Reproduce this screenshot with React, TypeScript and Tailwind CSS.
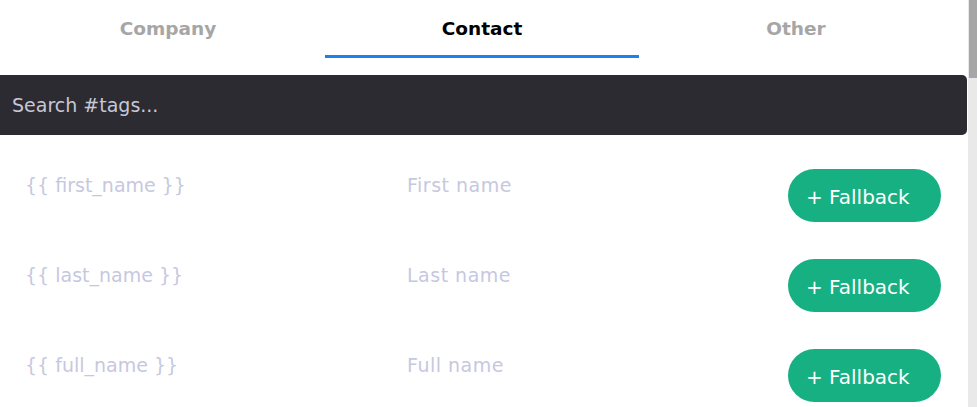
import React, { useState } from 'react';

const tabs = ['Company', 'Contact', 'Other'];

const fields = [
    { tag: 'first_name', label: 'First name' },
    { tag: 'last_name', label: 'Last name' },
    { tag: 'full_name', label: 'Full name' },
];

const App: React.FC = () => {
    const [active, setActive] = useState('Contact');
    const [query, setQuery] = useState('');

    return (
        <div
            className="flex h-[407px] w-[977px] overflow-hidden bg-white"
            style={{ fontFamily: '"DejaVu Sans", Verdana, sans-serif' }}
        >
            <div className="flex-1 flex flex-col min-w-0">
                {/* Tabs */}
                <div className="flex pl-[11px] pr-[15px] h-[75px] shrink-0">
                    {tabs.map(tab => {
                        const isActive = tab === active;
                        return (
                            <button
                                key={tab}
                                onClick={() => setActive(tab)}
                                className="flex-1 flex flex-col items-center"
                            >
                                <span className={`mt-[17px] h-[24px] leading-[24px] text-[18.5px] font-bold ${isActive ? 'text-black' : 'text-[#a6a6a6]'}`}>
                                    {tab}
                                </span>
                                <span className={`mt-[14px] h-[3px] w-full ${isActive ? 'bg-[#1b80f0]' : 'bg-transparent'}`}></span>
                            </button>
                        );
                    })}
                </div>

                {/* Search */}
                <div className="pr-px shrink-0">
                    <input
                        value={query}
                        onChange={(e) => setQuery(e.target.value)}
                        placeholder="Search #tags..."
                        className="w-full h-[60px] bg-[#2c2b31] rounded-r-[5px] px-3 text-[19px] text-[#d0d0d8] placeholder:text-[#c6c8d6] focus:outline-none"
                    />
                </div>

                {/* Tag rows */}
                <div className="flex flex-col">
                    {fields.map(f => (
                        <div key={f.tag} className="flex items-start pl-[25px] pr-[27px] pt-[34px] pb-[3px]">
                            <span className="w-[382px] mt-[4px] leading-[24px] text-[19px] text-[#c6c8e0]">
                                {'{{ '}{f.tag}{' }}'}
                            </span>
                            <span className="flex-1 mt-[4px] leading-[24px] text-[19px] tracking-[0.5px] text-[#c6c8e0]">
                                {f.label}
                            </span>
                            <button className="w-[153px] h-[53px] rounded-full bg-[#17b082] text-white text-[20px] text-left pl-[18px] pt-[2px]">
                                + Fallback
                            </button>
                        </div>
                    ))}
                </div>
            </div>

            {/* Scrollbar */}
            <div className="w-[9px] shrink-0 bg-[#e9e9e9] pl-px">
                <div className="h-[78px] bg-[#a6a6a6]"></div>
            </div>
        </div>
    );
};

export default App;
